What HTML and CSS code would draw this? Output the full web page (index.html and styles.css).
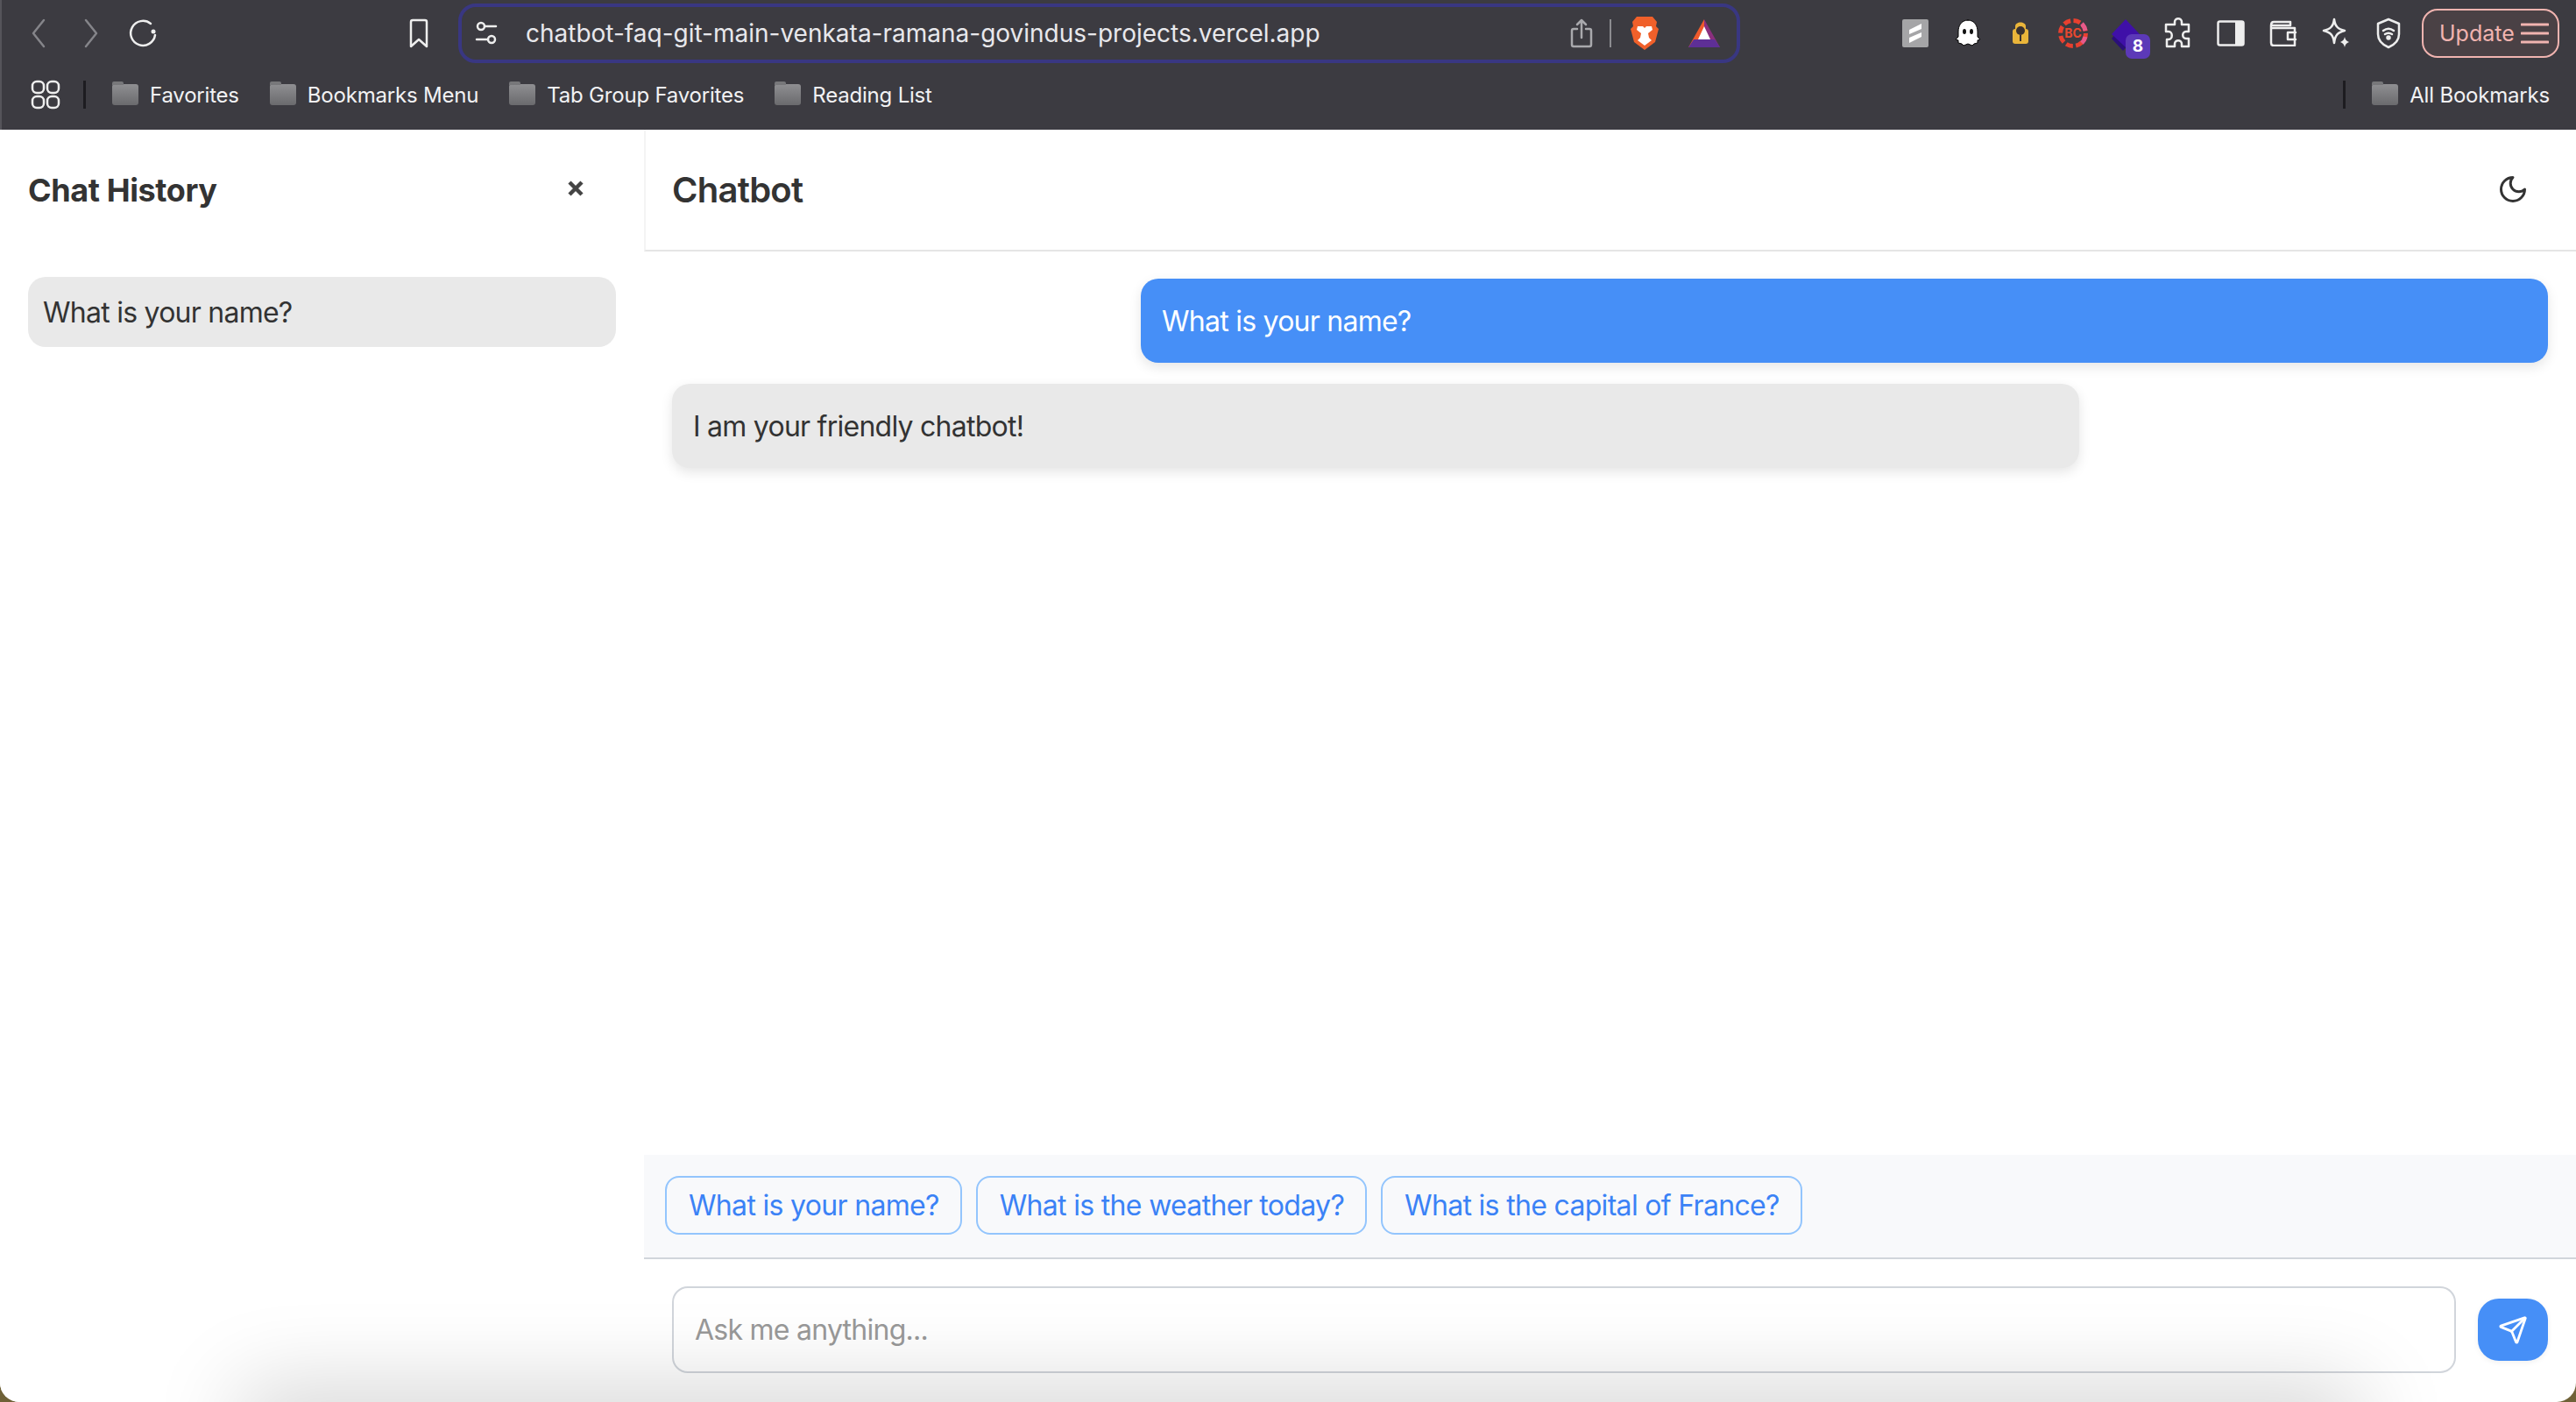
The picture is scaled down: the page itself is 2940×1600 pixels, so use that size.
FILE: index.html
```html
<!DOCTYPE html>
<html>
<head>
    <title>Chatbot</title>
    <link rel="stylesheet" href="styles.css">
</head>
<body>
<div class="window">
    <!-- Browser toolbar -->
    <div class="toolbar">
        <div class="nav-row">
            <span class="slot dim"><svg width="36" height="36" viewBox="0 0 36 36"><path d="M24 3 12 18l12 15" /></svg></span>
            <span class="slot dim"><svg width="36" height="36" viewBox="0 0 36 36"><path d="M12 3l12 15-12 15" /></svg></span>
            <span class="slot"><svg width="36" height="36" viewBox="0 0 36 36"><path d="M26 7A14 14 0 1 0 31 20" /><circle cx="29" cy="16" r="2.5" fill="#eee" stroke="none" /></svg></span>
            <span class="slot bookmark"><svg width="36" height="36" viewBox="0 0 36 36"><path d="M9 5q0-2 2-2h14q2 0 2 2v28l-9-8-9 8z" /></svg></span>
            <div class="address">
                <span class="url-icon"><svg width="30" height="30" viewBox="0 0 30 30"><circle cx="9" cy="7" r="4" /><path d="M13 7h13M4 22h13" /><circle cx="21" cy="22" r="4" /></svg></span>
                <span class="url">chatbot-faq-git-main-venkata-ramana-govindus-projects.vercel.app</span>
                <span class="share"><svg width="26" height="34" viewBox="0 0 26 34"><path d="M8 12H4q-2 0-2 2v16q0 2 2 2h18q2 0 2-2V14q0-2-2-2h-4M13 22V2M8 7l5-5 5 5" /></svg></span>
                <span class="url-sep"></span>
                <span class="brave"><svg class="solid" width="32" height="38" viewBox="0 0 32 38"><path fill="#f0602a" d="M7 0h18l5 6-1 5 3 3-4 15-12 9-12-9-4-15 3-3-1-5z" /><path fill="#fff" d="M8 11h6l2 2 2-2h6l1 4-5 4 1 5 3 3-8 6-8-6 3-3 1-5-5-4z" /></svg></span>
                <span class="rewards"><svg class="solid" width="36" height="32" viewBox="0 0 36 32"><path fill="#ef5a2c" d="M18 0 0 32h18z" /><path fill="#8a2f7e" d="M18 0v32h18z" /><path fill="#5e2f96" d="M6 23h24l6 9H0z" /><path fill="#fff" d="M18 8l7 15H11z" /></svg></span>
            </div>
            <div class="extensions">
                <span class="slot"><svg class="solid" width="30" height="32" viewBox="0 0 30 32"><rect width="30" height="32" rx="2" fill="#a5a5a7" /><path fill="#fff" d="M22 5 8 12v5l14-6zM22 15 8 21v6l14-7z" /></svg></span>
                <span class="slot"><svg width="30" height="32" viewBox="0 0 30 32"><path fill="#fff" stroke="#000" stroke-width="1" d="M15 1C7 1 4 8 4 14v6l-3 3 3 1v3l4 1 2 2 5-2 5 2 2-2 4-1v-3l3-1-3-3v-6c0-6-3-13-11-13z" /><ellipse cx="11" cy="14" rx="2" ry="3" fill="#111" stroke="none" /><ellipse cx="19" cy="14" rx="2" ry="3" fill="#111" stroke="none" /></svg></span>
                <span class="slot"><svg class="solid" width="20" height="26" viewBox="0 0 20 26"><rect x="1" y="8" width="18" height="17" rx="3" fill="#eab53a" /><path fill="#eab53a" d="M4 8V5c0-6 12-6 12 0v3z" /><circle cx="10" cy="10" r="5" fill="#3a3230" /><rect x="9" y="15" width="2" height="7" fill="#3a3230" /></svg></span>
                <span class="slot"><svg width="34" height="34" viewBox="0 0 34 34"><circle cx="17" cy="17" r="14.500" fill="none" stroke="#e8402f" stroke-width="5" stroke-dasharray="8 3.400" stroke-linecap="butt" /><path d="M27 6a15 15 0 0 1 4 8M31 21a15 15 0 0 1-4 7" fill="none" stroke="#e85a8a" stroke-width="5" stroke-linecap="butt" /><text x="17" y="22" class="bc-text">BC</text></svg></span>
                <span class="slot stack"><svg class="solid" width="32" height="36" viewBox="0 0 32 36"><path fill="#2a0f78" d="M5 16 0 22l13 14 8-9z" /><path fill="#3f10a8" d="M16 0l16 17-16 15L0 17z" /></svg><span class="badge">8</span></span>
                <span class="slot"><svg width="34" height="36" viewBox="0 0 34 36"><path d="M13 5c0-5 8-5 8 0v3h8v8h-3c-5 0-5 8 0 8h3v9h-8v-3c0-5-8-5-8 0v3H4v-8h2c5 0 5-9 0-9H3V8h10z" /></svg></span>
                <span class="slot"><svg width="32" height="30" viewBox="0 0 32 30"><rect x="1.5" y="1.5" width="29" height="27" rx="2" /><rect x="21" y="2" width="9" height="26" fill="#eee" stroke="none" /></svg></span>
                <span class="slot"><svg width="32" height="30" viewBox="0 0 32 30"><path d="M4 6h20V2H5Q2 2 2 6v20q0 3 3 3h24V9H4M30 14h-9v8h9" /></svg></span>
                <span class="slot"><svg width="34" height="36" viewBox="0 0 34 36"><path d="M15 2c1 8 4 11 12 13-8 2-11 5-12 14-1-9-4-12-12-14 8-2 11-5 12-13z" /><path fill="#eee" stroke="none" d="M27 22c.5 3 2 5 5 6-3 1-4.500 3-5 6-.5-3-2-5-5-6 3-1 4.500-3 5-6z" /></svg></span>
                <span class="slot"><svg width="30" height="36" viewBox="0 0 30 36"><path d="M15 2l12 5v12c0 7-5 12-12 15C8 31 3 26 3 19V7z" /><path d="M9 15c4-3 8-3 12 0M11 19c3-2 5-2 8 0" /><circle cx="15" cy="23" r="1.500" fill="#eee" /></svg></span>
            </div>
            <div class="update">Update<svg width="32" height="26" viewBox="0 0 32 26"><path d="M1 3h30M1 13h30M1 23h30" /></svg></div>
        </div>
        <div class="bookmarks">
            <span class="apps"><svg width="34" height="34" viewBox="0 0 34 34"><rect x="2" y="2" width="13" height="13" rx="5" /><rect x="19" y="2" width="13" height="13" rx="5" /><rect x="2" y="19" width="13" height="13" rx="5" /><rect x="19" y="19" width="13" height="13" rx="5" /></svg></span>
            <span class="bar-sep"></span>
            <span class="mark"><span class="folder"></span>Favorites</span>
            <span class="mark"><span class="folder"></span>Bookmarks Menu</span>
            <span class="mark"><span class="folder"></span>Tab Group Favorites</span>
            <span class="mark"><span class="folder"></span>Reading List</span>
            <span class="bar-sep right"></span>
            <span class="mark all"><span class="folder"></span>All Bookmarks</span>
        </div>
    </div>

    <div class="app">
        <!-- Sidebar -->
        <aside class="sidebar">
            <div class="sidebar-head">
                <h2>Chat History</h2>
                <svg class="close" width="20" height="20" viewBox="0 0 20 20"><path d="M3 3l14 14M17 3 3 17" /></svg>
            </div>
            <div class="history-item">What is your name?</div>
        </aside>

        <!-- Chat -->
        <main class="chat">
            <header class="chat-head">
                <h1>Chatbot</h1>
                <svg class="moon" width="36" height="36" viewBox="0 0 24 24"><path d="M12 3a6 6 0 0 0 9 9 9 9 0 1 1-9-9Z" /></svg>
            </header>
            <div class="messages">
                <div class="bubble user">What is your name?</div>
                <div class="bubble bot">I am your friendly chatbot!</div>
            </div>
            <div class="suggestions">
                <button class="chip">What is your name?</button>
                <button class="chip">What is the weather today?</button>
                <button class="chip">What is the capital of France?</button>
            </div>
            <div class="composer">
                <input class="ask" type="text" placeholder="Ask me anything...">
                <button class="send"><svg width="34" height="34" viewBox="0 0 24 24"><path d="M14.536 21.686a.5.5 0 0 0 .937-.024l6.5-19a.496.496 0 0 0-.635-.635l-19 6.500a.5.5 0 0 0-.024.937l7.930 3.180a2 2 0 0 1 1.112 1.110z" /><path d="m21.854 2.147-10.940 10.939" /></svg></button>
            </div>
        </main>
    </div>
    <!-- Shadow of the window below, falling over the page -->
    <div class="under-shadow"></div>
</div>
</body>
</html>
```

FILE: styles.css
```css
* {
    box-sizing: border-box;
}
html, body {
    height: 100%;
}
body {
    margin: 0;
    background-color: #6f6137;
    font-family: Inter, "Liberation Sans", sans-serif;
    color: #333;
    overflow: hidden;
}
h1, h2 {
    margin: 0;
    font-weight: 600;
}
button {
    font-family: inherit;
    cursor: pointer;
}
.window {
    position: relative;
    height: 1600px;
    display: flex;
    flex-direction: column;
    background-color: #fff;
    border-radius: 0 0 22px 22px;
    overflow: hidden;
}

/* Browser toolbar */
.toolbar {
    flex: 0 0 148px;
    background-color: #3c3b41;
    border-left: 2px solid #55545a;
    color: #f2f2f4;
}
.toolbar svg {
    fill: none;
    stroke: #eee;
    stroke-width: 2.5;
    stroke-linejoin: round;
    stroke-linecap: round;
}
.toolbar svg.solid {
    stroke: none;
}
.nav-row {
    height: 76px;
    padding: 0 19px 0 12px;
    display: flex;
    align-items: center;
}
.slot {
    position: relative;
    flex: 0 0 60px;
    display: flex;
    align-items: center;
    justify-content: center;
}
.slot.dim svg {
    stroke: #85858a;
}
.slot.bookmark {
    margin-left: 254px;
}
.address {
    margin-left: 15px;
    width: 1463px;
    height: 68px;
    border: 4px solid #393782;
    border-radius: 20px;
    display: flex;
    align-items: center;
    padding: 0 19px 0 13px;
}
.url-icon {
    width: 30px;
    display: flex;
}
.url {
    margin-left: 30px;
    font-size: 28px;
    color: #e8e8ec;
    white-space: nowrap;
}
.share {
    margin-left: auto;
    display: flex;
}
.share svg {
    stroke: #a9a9ad;
}
.url-sep {
    width: 2px;
    height: 32px;
    margin-left: 19px;
    background-color: #8c8c90;
}
.brave {
    margin-left: 22px;
    display: flex;
}
.rewards {
    margin-left: 34px;
    display: flex;
}
.extensions {
    margin-left: auto;
    display: flex;
    align-items: center;
}
.bc-text {
    font-size: 14px;
    font-weight: 700;
    text-anchor: middle;
    fill: #e8482f;
    stroke: none;
}
.stack svg {
    margin-top: 3px;
}
.badge {
    position: absolute;
    left: 30px;
    top: 20px;
    width: 28px;
    height: 28px;
    border-radius: 7px;
    background-color: #5c39b8;
    color: #fff;
    font-size: 19px;
    font-weight: 700;
    text-align: center;
    line-height: 28px;
}
.update {
    margin-left: 8px;
    width: 157px;
    height: 56px;
    border: 2px solid #f1b4b0;
    border-radius: 18px;
    background-color: #4a4145;
    color: #f1b4b0;
    font-size: 25px;
    display: flex;
    align-items: center;
    justify-content: space-between;
    padding: 0 10px 0 18px;
}
.update svg {
    stroke: #f1b4b0;
    stroke-width: 3;
}
.bookmarks {
    height: 72px;
    padding: 0 30px 8px 33px;
    display: flex;
    align-items: center;
}
.apps {
    display: flex;
}
.bar-sep {
    width: 3px;
    height: 32px;
    margin-left: 26px;
    background-color: #1d1c20;
}
.bar-sep.right {
    margin-left: auto;
}
.mark {
    display: flex;
    align-items: center;
    margin-left: 35px;
    font-size: 24px;
    letter-spacing: -0.2px;
    white-space: nowrap;
}
.mark.all {
    margin-left: 30px;
}
.bar-sep + .mark {
    margin-left: 30px;
}
.folder {
    position: relative;
    width: 30px;
    height: 24px;
    margin-right: 13px;
    border-radius: 3px;
    background: linear-gradient(#8f8f92, #6a6a6d);
}
.folder::before {
    content: "";
    position: absolute;
    left: 0;
    top: -3px;
    width: 13px;
    height: 4px;
    border-radius: 2px 2px 0 0;
    background-color: #77777a;
}

/* App */
.app {
    flex: 1;
    display: flex;
    min-height: 0;
    letter-spacing: -0.75px;
}
.sidebar {
    flex: 0 0 735px;
    padding: 0 32px;
    background-color: #fff;
}
.sidebar-head {
    height: 137px;
    margin-bottom: 31px;
    display: flex;
    align-items: center;
    justify-content: space-between;
}
.sidebar-head h2 {
    font-size: 36px;
    font-weight: 700;
    letter-spacing: -0.4px;
}
.close {
    margin-right: 36px;
    margin-top: -4px;
    fill: none;
    stroke: #444;
    stroke-width: 4.500;
}
.history-item {
    height: 80px;
    padding: 0 17px;
    display: flex;
    align-items: center;
    border-radius: 20px;
    background-color: #e9e9e9;
    font-size: 32px;
}
.chat {
    flex: 1;
    display: flex;
    flex-direction: column;
    min-width: 0;
}
.chat-head {
    height: 139px;
    padding: 0 54px 0 30px;
    display: flex;
    align-items: center;
    justify-content: space-between;
    border-bottom: 2px solid #e5e5e5;
    border-left: 2px solid #f4f4f4;
}
.chat-head h1 {
    font-size: 40px;
}
.moon {
    margin-top: -2px;
    fill: none;
    stroke: #333;
    stroke-width: 2;
    stroke-linecap: round;
    stroke-linejoin: round;
}
.messages {
    flex: 1;
    padding: 31px 32px;
    display: flex;
    flex-direction: column;
    gap: 24px;
}
.bubble {
    width: 1606px;
    height: 96px;
    padding: 0 24px;
    display: flex;
    align-items: center;
    border-radius: 20px;
    font-size: 32px;
    box-shadow: 0 5px 14px rgba(0, 0, 0, 0.1);
}
.bubble.user {
    align-self: flex-end;
    background-color: #468ff7;
    color: #fff;
}
.bubble.bot {
    background-color: #e9e9e9;
}
.suggestions {
    height: 119px;
    padding: 24px 24px 26px;
    display: flex;
    gap: 16px;
    background-color: #f8f9fb;
    border-bottom: 2px solid #d1d5db;
}
.chip {
    padding: 0 24px 0 25px;
    border: 2px solid #93c5fd;
    border-radius: 16px;
    background-color: transparent;
    color: #3b82f6;
    font-size: 32px;
    letter-spacing: -0.68px;
    white-space: nowrap;
}
.composer {
    height: 163px;
    padding: 31px 32px 0;
    display: flex;
    gap: 25px;
}
.ask {
    flex: 1;
    height: 99px;
    padding: 0 24px;
    border: 2px solid #d1d5db;
    border-radius: 18px;
    background-color: transparent;
    font-family: inherit;
    font-size: 32px;
    letter-spacing: inherit;
    color: #333;
}
.ask::placeholder {
    color: #999;
}
.send {
    flex: 0 0 80px;
    height: 71px;
    margin-top: 14px;
    padding: 0;
    border: none;
    border-radius: 24px;
    background-color: #468ff7;
    display: flex;
    align-items: center;
    justify-content: center;
    box-shadow: 0 2px 6px rgba(0, 0, 0, 0.06);
}
.send svg {
    fill: none;
    stroke: #fff;
    stroke-width: 2;
    stroke-linecap: round;
    stroke-linejoin: round;
}
.under-shadow {
    position: absolute;
    left: 300px;
    right: 270px;
    bottom: -50px;
    height: 40px;
    pointer-events: none;
    box-shadow: 0 0 100px 25px rgba(0, 0, 0, 0.18);
}
```
